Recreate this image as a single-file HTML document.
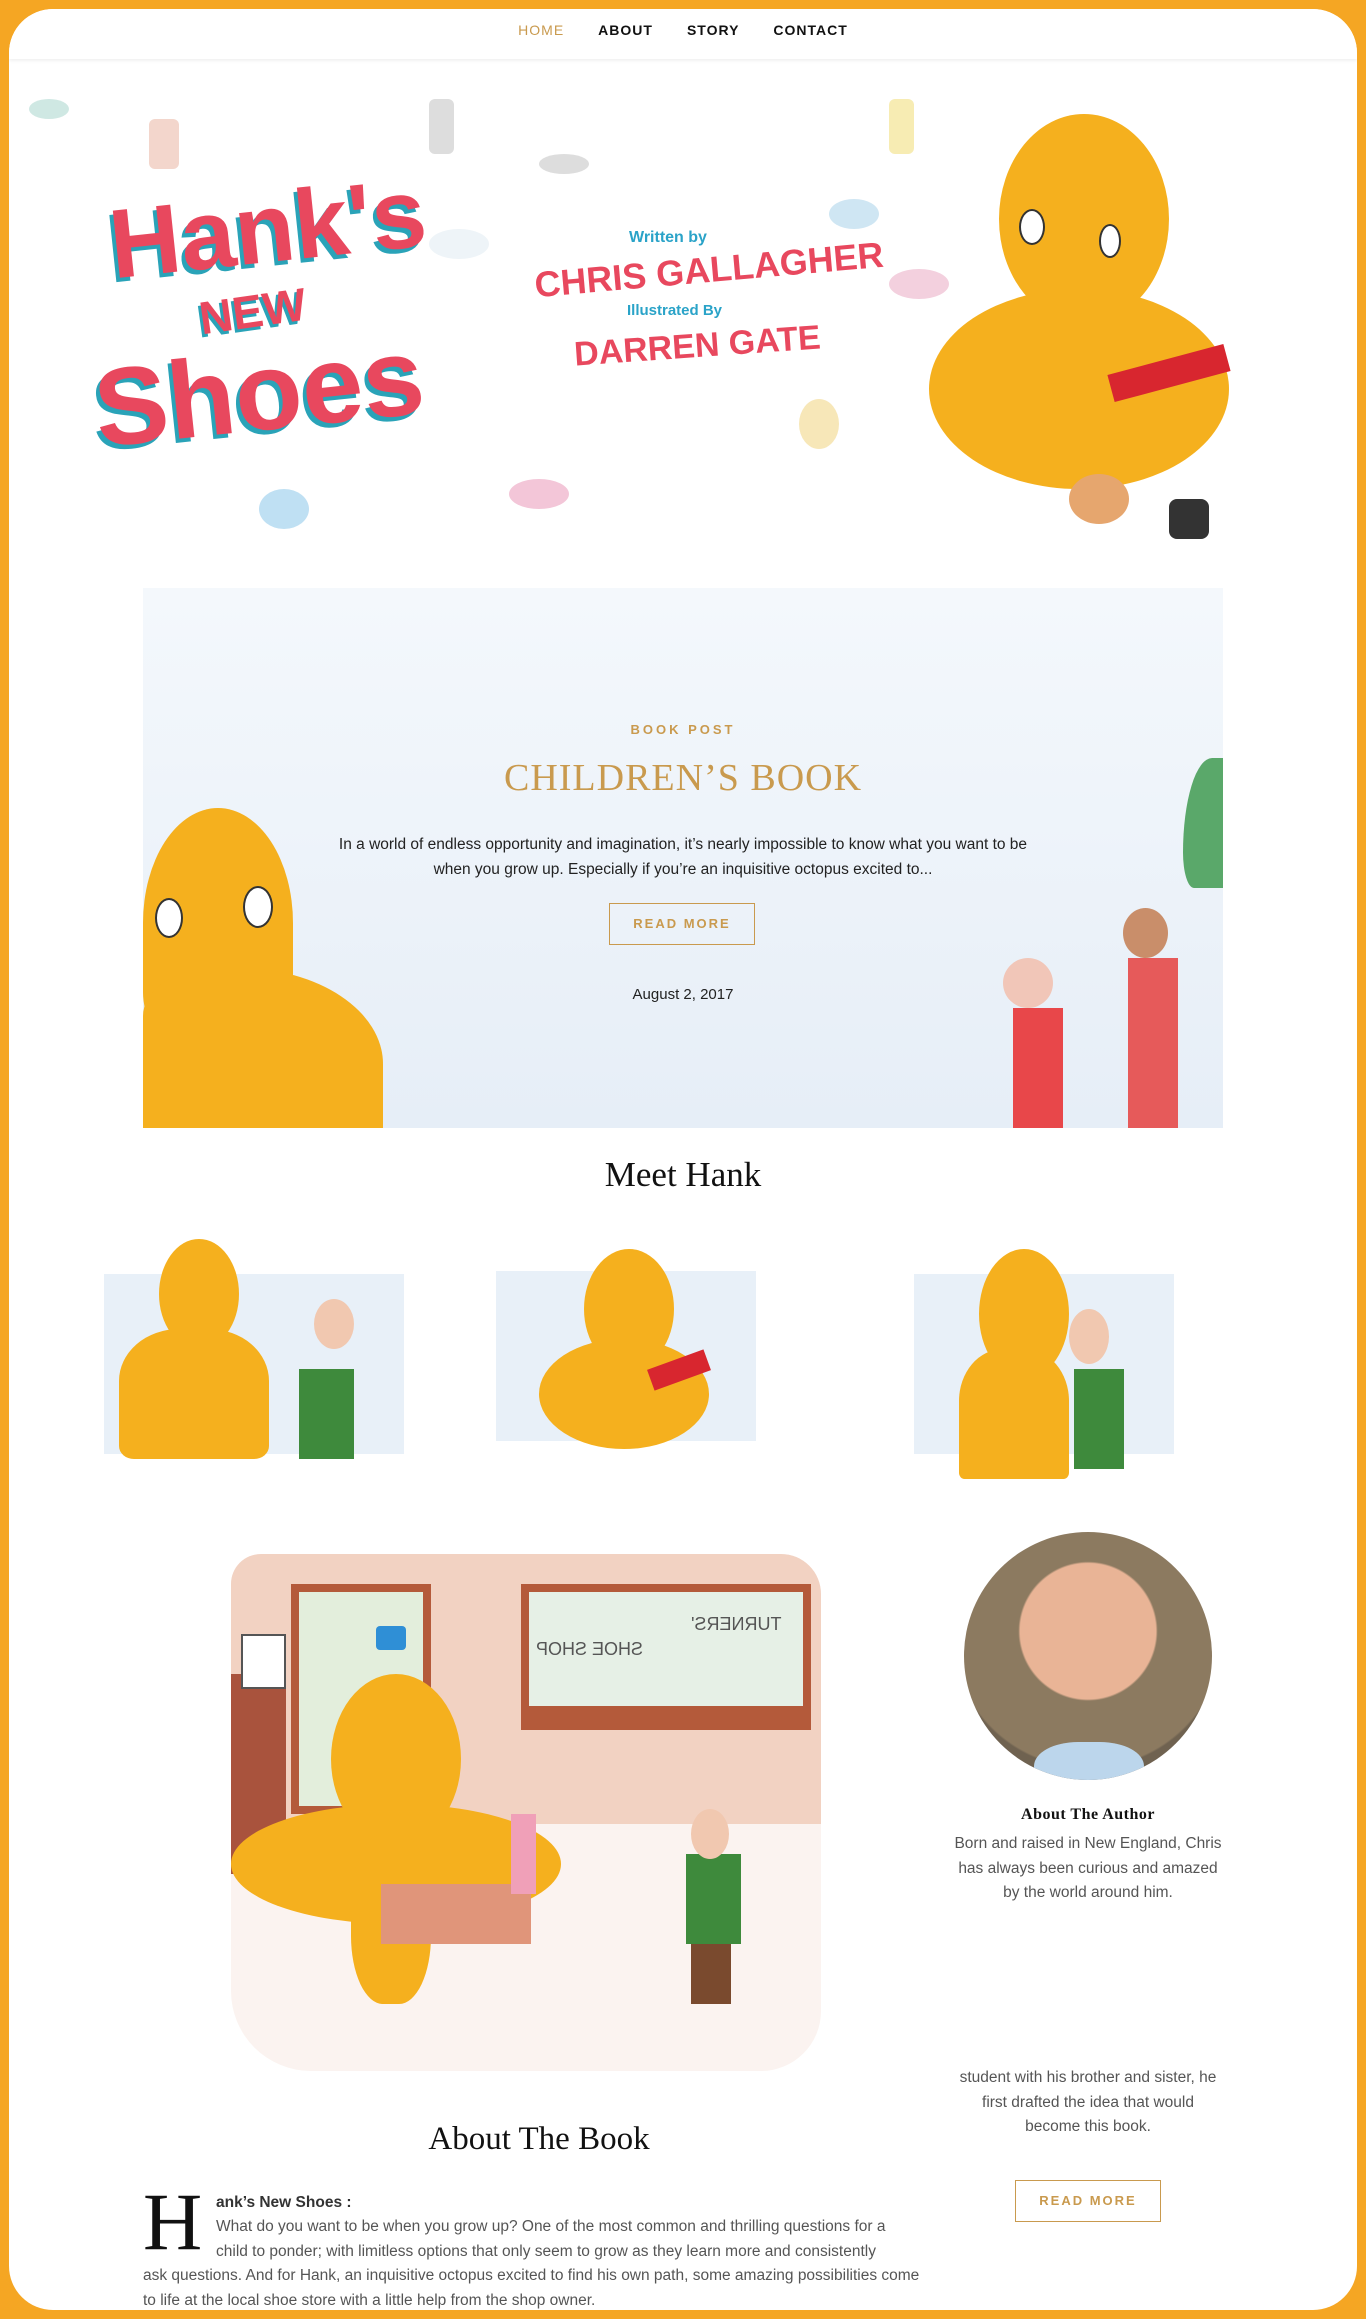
<!DOCTYPE html>
<html><head><meta charset="utf-8">
<style>
*{margin:0;padding:0;box-sizing:border-box}
html,body{width:1366px;height:2319px;background:#f5a623;overflow:hidden}
.frame{position:absolute;left:9px;top:9px;width:1348px;height:2301px;background:#fff;border-radius:44px;overflow:hidden;font-family:"Liberation Sans",sans-serif}
.nav{position:absolute;left:0;top:0;width:100%;height:50px;background:#fff;box-shadow:0 2px 3px rgba(0,0,0,.06);z-index:5;text-align:center}
.nav a{display:inline-block;font-size:14px;font-weight:bold;letter-spacing:1px;color:#111;margin:0 17px;line-height:42px;text-decoration:none}
.nav a.on{color:#c99a4e;font-weight:normal}
.abs{position:absolute}
.serif{font-family:"Liberation Serif",serif}
.btn{position:absolute;border:1px solid #c99a4e;color:#c99a4e;font-size:13px;font-weight:bold;letter-spacing:2px;text-align:center}
.p{font-size:15.5px;color:#555;line-height:24.5px}
.blob{position:absolute;border-radius:50%}
</style></head><body>
<div class="frame">
<div class="nav"><a class="on">HOME</a><a>ABOUT</a><a>STORY</a><a>CONTACT</a></div>

<div class="abs" style="left:0;top:50px;width:1348px;height:488px;background:#fff">
 <div class="blob" style="left:20px;top:40px;width:40px;height:20px;background:#cfe8e3"></div>
 <div class="blob" style="left:140px;top:60px;width:30px;height:50px;background:#f3d6cc;border-radius:6px"></div>
 <div class="blob" style="left:420px;top:40px;width:25px;height:55px;background:#ddd;border-radius:6px"></div>
 <div class="blob" style="left:880px;top:40px;width:25px;height:55px;background:#f7ecb3;border-radius:6px"></div>
 <div class="blob" style="left:530px;top:95px;width:50px;height:20px;background:#ddd"></div>
 <div class="blob" style="left:820px;top:140px;width:50px;height:30px;background:#cfe6f3"></div>
 <div class="blob" style="left:880px;top:210px;width:60px;height:30px;background:#f3d0de"></div>
 <div class="blob" style="left:420px;top:170px;width:60px;height:30px;background:#eef4f8"></div>
 <div class="blob" style="left:250px;top:430px;width:50px;height:40px;background:#bfe0f3"></div>
 <div class="blob" style="left:500px;top:420px;width:60px;height:30px;background:#f3c6d8"></div>
 <div class="blob" style="left:790px;top:340px;width:40px;height:50px;background:#f7e7b8"></div>
 <div class="abs" style="left:100px;top:120px;color:#e8485e;font-weight:bold;font-size:98px;line-height:98px;text-shadow:-4px 4px 0 #2aa3b8;transform:rotate(-6deg)">Hank's</div>
 <div class="abs" style="left:190px;top:225px;color:#e8485e;font-weight:bold;font-size:46px;text-shadow:-3px 3px 0 #2aa3b8;transform:rotate(-8deg)">NEW</div>
 <div class="abs" style="left:85px;top:270px;color:#e8485e;font-weight:bold;font-size:110px;text-shadow:-4px 4px 0 #2aa3b8;transform:rotate(-6deg)">Shoes</div>
 <div class="abs" style="left:620px;top:170px;color:#2aa3c8;font-weight:bold;font-size:16px">Written by</div>
 <div class="abs" style="left:525px;top:190px;color:#e8485e;font-weight:bold;font-size:36px;transform:rotate(-5deg)">CHRIS GALLAGHER</div>
 <div class="abs" style="left:618px;top:243px;color:#2aa3c8;font-weight:bold;font-size:15px">Illustrated By</div>
 <div class="abs" style="left:565px;top:268px;color:#e8485e;font-weight:bold;font-size:34px;transform:rotate(-4deg)">DARREN GATE</div>
 <div class="blob" style="left:990px;top:55px;width:170px;height:210px;background:#f5b01e"></div>
 <div class="blob" style="left:920px;top:230px;width:300px;height:200px;background:#f5b01e"></div>
 <div class="blob" style="left:1010px;top:150px;width:26px;height:36px;background:#fff;border:2px solid #333"></div>
 <div class="blob" style="left:1090px;top:165px;width:22px;height:34px;background:#fff;border:2px solid #333"></div>
 <div class="abs" style="left:1100px;top:300px;width:120px;height:28px;background:#d8262f;transform:rotate(-15deg)"></div>
 <div class="abs" style="left:1060px;top:415px;width:60px;height:50px;border-radius:50%;background:#e6a66e"></div>
 <div class="abs" style="left:1160px;top:440px;width:40px;height:40px;background:#333;border-radius:8px"></div>
</div>

<div class="abs" style="left:134px;top:579px;width:1080px;height:540px;background:linear-gradient(#f4f8fc,#e6eef7)">
 <div class="blob" style="left:0;top:220px;width:150px;height:230px;background:#f5b01e;border-radius:50% 50% 20% 20%"></div>
 <div class="abs" style="left:0;top:380px;width:240px;height:160px;background:#f5b01e;border-radius:30% 60% 0 0"></div>
 <div class="blob" style="left:12px;top:310px;width:28px;height:40px;background:#fff;border:2px solid #333"></div>
 <div class="blob" style="left:100px;top:298px;width:30px;height:42px;background:#fff;border:2px solid #333"></div>
 <div class="abs" style="left:1040px;top:170px;width:40px;height:130px;background:#5aa86a;border-radius:80% 0 0 30%"></div>
 <div class="abs" style="left:860px;top:370px;width:50px;height:50px;border-radius:50%;background:#f1c6b8"></div>
 <div class="abs" style="left:870px;top:420px;width:50px;height:120px;background:#e8474a"></div>
 <div class="abs" style="left:980px;top:320px;width:45px;height:50px;border-radius:50%;background:#c98e6a"></div>
 <div class="abs" style="left:985px;top:370px;width:50px;height:170px;background:#e65a5a"></div>
 <div class="abs" style="left:0;top:134px;width:1080px;text-align:center;color:#c99a4e;font-size:13px;font-weight:bold;letter-spacing:3px">BOOK POST</div>
 <div class="abs serif" style="left:0;top:168px;width:1080px;text-align:center;color:#c99a4e;font-size:38px;letter-spacing:1px">CHILDREN’S BOOK</div>
 <div class="abs" style="left:180px;top:244px;width:720px;text-align:center;color:#222;font-size:15.5px;line-height:25px">In a world of endless opportunity and imagination, it’s nearly impossible to know what you want to be when you grow up. Especially if you’re an inquisitive octopus excited to...</div>
 <div class="btn" style="left:466px;top:315px;width:146px;height:42px;line-height:40px">READ MORE</div>
 <div class="abs" style="left:0;top:398px;width:1080px;text-align:center;color:#222;font-size:15px">August 2, 2017</div>
</div>

<div class="abs serif" style="left:0;top:1146px;width:1348px;text-align:center;font-size:35px;color:#111">Meet Hank</div>

<div class="abs" style="left:95px;top:1265px;width:300px;height:180px;background:#e8f0f8"></div>
<div class="blob" style="left:150px;top:1230px;width:80px;height:110px;background:#f5b01e"></div>
<div class="abs" style="left:110px;top:1320px;width:150px;height:130px;background:#f5b01e;border-radius:40% 40% 10% 10%"></div>
<div class="abs" style="left:290px;top:1360px;width:55px;height:90px;background:#3e8a3c"></div>
<div class="blob" style="left:305px;top:1290px;width:40px;height:50px;background:#f1c8b0"></div>

<div class="abs" style="left:487px;top:1262px;width:260px;height:170px;background:#e8f0f8"></div>
<div class="blob" style="left:575px;top:1240px;width:90px;height:120px;background:#f5b01e"></div>
<div class="abs" style="left:530px;top:1330px;width:170px;height:110px;background:#f5b01e;border-radius:50%"></div>
<div class="abs" style="left:640px;top:1350px;width:60px;height:22px;background:#d8262f;transform:rotate(-20deg)"></div>

<div class="abs" style="left:905px;top:1265px;width:260px;height:180px;background:#e8f0f8"></div>
<div class="blob" style="left:970px;top:1240px;width:90px;height:130px;background:#f5b01e"></div>
<div class="abs" style="left:950px;top:1340px;width:110px;height:130px;background:#f5b01e;border-radius:40% 40% 5% 5%"></div>
<div class="abs" style="left:1065px;top:1360px;width:50px;height:100px;background:#3e8a3c"></div>
<div class="blob" style="left:1060px;top:1300px;width:40px;height:55px;background:#f1c8b0"></div>

<div class="abs" style="left:222px;top:1545px;width:590px;height:517px;background:#fbf3f0;border-radius:30px 40px 60px 80px;overflow:hidden">
 <div class="abs" style="left:0;top:0;width:590px;height:270px;background:#f2d2c2"></div>
 <div class="abs" style="left:60px;top:30px;width:140px;height:230px;background:#e3eedc;border:8px solid #b45a3a"></div>
 <div class="abs" style="left:290px;top:30px;width:290px;height:130px;background:#e6f0e6;border:8px solid #b45a3a"></div>
 <div class="abs" style="left:290px;top:160px;width:290px;height:16px;background:#b45a3a"></div>
 <div class="abs" style="left:0;top:120px;width:55px;height:200px;background:#a9533d"></div>
 <div class="abs" style="left:10px;top:80px;width:45px;height:55px;background:#fff;border:2px solid #555"></div>
 <div class="abs" style="left:305px;top:85px;font-size:18px;color:#555;transform:scaleX(-1)">SHOE SHOP</div>
 <div class="abs" style="left:460px;top:60px;font-size:18px;color:#555;transform:scaleX(-1)">TURNERS'</div>
 <div class="blob" style="left:100px;top:120px;width:130px;height:170px;background:#f5b01e"></div>
 <div class="abs" style="left:0;top:250px;width:330px;height:120px;background:#f5b01e;border-radius:50%"></div>
 <div class="abs" style="left:120px;top:280px;width:80px;height:170px;background:#f5b01e;border-radius:40%"></div>
 <div class="abs" style="left:145px;top:72px;width:30px;height:24px;background:#2f8fd6;border-radius:4px"></div>
 <div class="abs" style="left:150px;top:330px;width:150px;height:60px;background:#e0957a"></div>
 <div class="abs" style="left:455px;top:300px;width:55px;height:90px;background:#3e8a3c"></div>
 <div class="blob" style="left:460px;top:255px;width:38px;height:50px;background:#f1c8b0"></div>
 <div class="abs" style="left:460px;top:390px;width:40px;height:60px;background:#7a4a2e"></div>
 <div class="abs" style="left:280px;top:260px;width:25px;height:80px;background:#f0a0b8"></div>
</div>

<div class="blob" style="left:955px;top:1523px;width:248px;height:248px;background:radial-gradient(circle at 50% 40%,#e9b496 0 35%,#8c7a60 36% 70%,#6f6250 71%);overflow:hidden">
 <div class="abs" style="left:70px;top:210px;width:110px;height:60px;background:#bcd6ec;border-radius:40% 40% 0 0"></div>
</div>
<div class="abs serif" style="left:955px;top:1797px;width:248px;text-align:center;font-size:16px;font-weight:bold;color:#111;letter-spacing:.5px">About The Author</div>
<div class="abs p" style="left:944px;top:1823px;width:270px;text-align:center">Born and raised in New England, Chris has always been curious and amazed by the world around him.</div>
<div class="abs p" style="left:944px;top:2057px;width:270px;text-align:center">student with his brother and sister, he first drafted the idea that would become this book.</div>
<div class="btn" style="left:1006px;top:2171px;width:146px;height:42px;line-height:40px">READ MORE</div>

<div class="abs serif" style="left:320px;top:2112px;width:420px;text-align:center;font-size:33px;color:#111">About The Book</div>
<div class="abs serif" style="left:134px;top:2172px;font-size:82px;line-height:82px;color:#111">H</div>
<div class="abs p" style="left:207px;top:2182px;width:695px;color:#333;font-weight:bold">ank’s New Shoes :</div>
<div class="abs p" style="left:207px;top:2206px;width:695px">What do you want to be when you grow up? One of the most common and thrilling questions for a child to ponder; with limitless options that only seem to grow as they learn more and consistently</div>
<div class="abs p" style="left:134px;top:2255px;width:785px">ask questions. And for Hank, an inquisitive octopus excited to find his own path, some amazing possibilities come to life at the local shoe store with a little help from the shop owner.</div>
</div>
</body></html>
